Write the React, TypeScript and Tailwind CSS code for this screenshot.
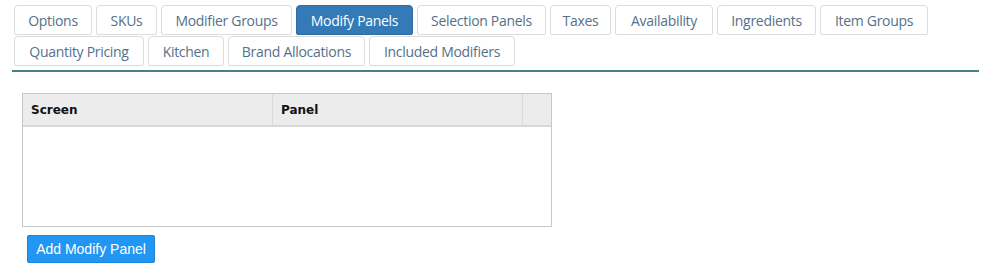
import React, { useState } from 'react';

const TABS = [
  { label: 'Options', w: 'w-[78px]' },
  { label: 'SKUs', w: 'w-[61px]' },
  { label: 'Modifier Groups', w: 'w-[131px]' },
  { label: 'Modify Panels', w: 'w-[117px]' },
  { label: 'Selection Panels', w: 'w-[129px]' },
  { label: 'Taxes', w: 'w-[61px]' },
  { label: 'Availability', w: 'w-[98px]' },
  { label: 'Ingredients', w: 'w-[99px]' },
  { label: 'Item Groups', w: 'w-[108px]' },
  { label: 'Quantity Pricing', w: 'w-[130px]' },
  { label: 'Kitchen', w: 'w-[76px]' },
  { label: 'Brand Allocations', w: 'w-[137px]' },
  { label: 'Included Modifiers', w: 'w-[146px]' },
];

const App: React.FC = () => {
  const [active, setActive] = useState('Modify Panels');

  return (
    <div className="min-h-[280px] bg-white px-3 font-['Open_Sans','Noto_Sans',sans-serif]">
      <div className="flex flex-wrap gap-x-[4px] gap-y-[1px] pt-[5px] pl-[2px] w-[967px]">
        {TABS.map((tab) => (
          <button
            key={tab.label}
            onClick={() => setActive(tab.label)}
            className={`${tab.w} h-[30px] rounded-t-[4px] rounded-b-[2px] border text-[14px] tracking-[-0.3px] text-center ${
              active === tab.label
                ? 'bg-[#337ab7] border-[#2e6da4] text-white'
                : 'bg-white border-[#dcdcdc] text-[#54718a]'
            }`}
          >
            {tab.label}
          </button>
        ))}
      </div>
      <div className="mt-[4px] h-[2px] w-[967px] bg-[#4a7d8d]" />

      <div className="ml-[10px] mt-[21px] w-[530px] h-[134px] border border-[#c8c8c8] flex flex-col">
        <div className="flex h-[33px] bg-[#ececec] border-b-2 border-[#d8d8d8] text-[12px] font-bold text-[#111] font-['DejaVu_Sans','Noto_Sans',sans-serif]">
          <div className="w-[250px] border-r border-[#dadada] flex items-center pl-[8px]">Screen</div>
          <div className="w-[250px] border-r border-[#dadada] flex items-center pl-[8px]">Panel</div>
          <div className="flex-1" />
        </div>
        <div className="flex-1" />
      </div>

      <button className="ml-[15px] mt-[8px] w-[128px] h-[28px] rounded-[2px] bg-[#2196f3] border border-[#1a84d8] text-white text-[14px] font-['Liberation_Sans',Arial,sans-serif]">
        Add Modify Panel
      </button>
    </div>
  );
};

export default App;
